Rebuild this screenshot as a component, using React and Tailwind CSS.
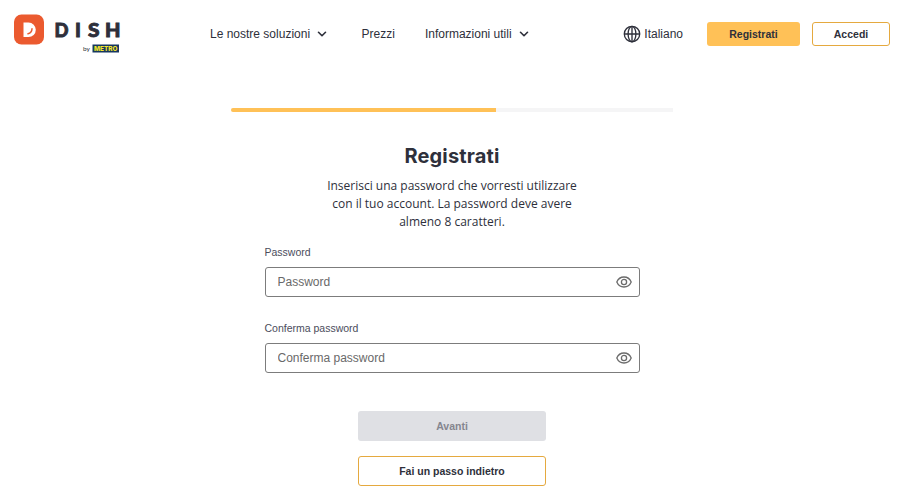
import { ChevronDown } from 'lucide-react'

const DishLogo = () => (
  <svg width="108" height="42" viewBox="0 0 108 42" aria-label="DISH by METRO">
    <rect x="0" y="1.5" width="30" height="30" rx="7.5" fill="#eb5a2f" />
    <path d="M9.5 9.5h5a7.3 7.3 0 0 1 0 14.600h-5z" fill="#fff" />
    <path d="M18 15.800c-.1 2.700-1.400 4.400-4 5" fill="none" stroke="#eb5a2f" strokeWidth="1.500" strokeLinecap="round" />
    <g fill="#2e303b" stroke="#2e303b" strokeWidth="0.9" fontFamily="Lato, sans-serif" fontSize="19.5" fontWeight="900">
      <text x="40.5" y="23.800" textLength="14" lengthAdjust="spacingAndGlyphs">D</text>
      <text x="61" y="23.800">I</text>
      <text x="74" y="23.800" textLength="11.5" lengthAdjust="spacingAndGlyphs">S</text>
      <text x="91" y="23.800" textLength="15.5" lengthAdjust="spacingAndGlyphs">H</text>
    </g>
    <text x="69" y="37.5" fill="#2e303b" fontFamily="Lato, sans-serif" fontSize="6.5">by</text>
    <rect x="78.5" y="31.5" width="26.5" height="8" fill="#17375f" />
    <text x="80" y="38" fill="#f5e62a" fontFamily="Inter, sans-serif" fontSize="6.6" fontWeight="800" textLength="23.5" lengthAdjust="spacingAndGlyphs">METRO</text>
  </svg>
)

const GlobeIcon = () => (
  <svg width="18" height="18" viewBox="0 0 18 18" fill="none" stroke="#2e303b" strokeWidth="1.35">
    <circle cx="9" cy="9" r="7.7" />
    <ellipse cx="9" cy="9" rx="3.9" ry="7.7" />
    <path d="M9 1.3v15.4M1.3 9h15.4" />
  </svg>
)

const EyeIcon = () => (
  <svg width="16" height="12" viewBox="0 0 16 12" fill="none" stroke="#6b6b6b" strokeWidth="1.3">
    <path d="M.8 6C2.2 2.7 4.8 1 8 1s5.8 1.7 7.2 5C13.8 9.3 11.2 11 8 11S2.2 9.3.8 6z" />
    <circle cx="8" cy="6" r="2.6" />
  </svg>
)

const PasswordField = ({ label }) => (
  <label className="block">
    <span className="block h-[13px] text-[10.5px] leading-[13px] text-[#4b4d5c]">{label}</span>
    <span className="mt-2 flex h-[30px] items-center rounded-[3px] border border-[#7c7c7c] pr-[7px] pl-3">
      <input
        type="text"
        placeholder={label}
        className="min-w-0 flex-1 text-[12px] outline-none placeholder:text-[#696969]"
      />
      <EyeIcon />
    </span>
  </label>
)

const Header = () => (
  <header className="flex h-[68px] items-center pr-[10px] pl-[14px] text-[12px]">
    <DishLogo />
    <nav className="ml-[88px] flex items-center">
      <a className="flex items-center gap-[5px] whitespace-nowrap">
        Le nostre soluzioni
        <ChevronDown className="h-[14px] w-[14px]" strokeWidth={2.8} />
      </a>
      <a className="ml-[32.5px]">Prezzi</a>
      <a className="ml-[30px] flex items-center gap-[5px] whitespace-nowrap">
        Informazioni utili
        <ChevronDown className="h-[14px] w-[14px]" strokeWidth={2.8} />
      </a>
    </nav>
    <div className="ml-auto flex items-center">
      <GlobeIcon />
      <span className="ml-[3px]">Italiano</span>
      <button className="ml-6 h-6 w-[93px] rounded-[3px] bg-[#ffc157] pt-[2px] text-[10.5px] font-bold">Registrati</button>
      <button className="ml-3 h-6 w-[78px] rounded-[3px] border border-[#e5a93f] pt-[2px] text-[10.5px] font-bold">Accedi</button>
    </div>
  </header>
)

export default function App() {
  return (
    <div className="h-[495px] w-[900px] overflow-hidden bg-white font-['Liberation_Sans',Arial,sans-serif] text-[#2e303b]">
      <Header />
      <main className="ml-[231px] w-[442px] pt-10">
        <div className="h-1 overflow-hidden rounded-l-full bg-[#f5f5f6]">
          <div className="h-full w-[60%] bg-[#ffc157]" />
        </div>
        <h1 className="mt-[30px] text-center font-['Inter',sans-serif] text-[20px] leading-7 font-bold tracking-[0.15px]">Registrati</h1>
        <p className="mx-auto mt-[7px] w-[270px] text-center font-['Open_Sans',sans-serif] text-[12px] leading-[18px]">
          Inserisci una password che vorresti utilizzare<br />
          con il tuo account. La password deve avere<br />
          almeno 8 caratteri.
        </p>
        <form className="mx-auto mt-[15px] w-[375px]">
          <PasswordField label="Password" />
          <div className="mt-[25px]">
            <PasswordField label="Conferma password" />
          </div>
          <div className="mx-auto mt-[38px] flex w-[188px] flex-col gap-[15px] text-[10.5px] font-bold">
            <button type="button" disabled className="h-[30px] rounded-[3px] bg-[#dfe0e4] pt-[2px] text-[#85868f]">Avanti</button>
            <button type="button" className="h-[30px] rounded-[3px] border border-[#e5a93f] pt-[2px]">Fai un passo indietro</button>
          </div>
        </form>
      </main>
    </div>
  )
}
